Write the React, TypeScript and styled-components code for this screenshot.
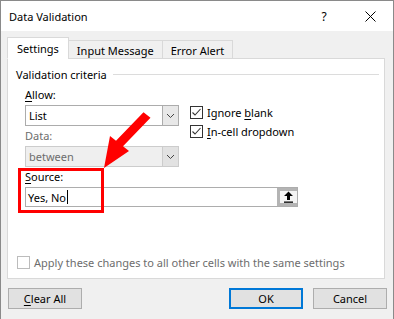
import React, { ReactElement } from 'react';
import styled, { createGlobalStyle } from 'styled-components';

const GlobalStyle = createGlobalStyle`
  html, body {
    margin: 0;
    padding: 0;
    background: #f0f0f0;
  }
  body {
    font-family: "Noto Sans", "Open Sans", sans-serif;
    font-size: 11px;
    color: #000;
  }
`;

const Window = styled.div`
  position: relative;
  width: 394px;
  height: 319px;
  box-sizing: border-box;
  border: 1px solid #8a8a8a;
  border-bottom: none;
  background: #f0f0f0;
  display: flex;
  flex-direction: column;
  overflow: hidden;
`;

const TitleBar = styled.div`
  height: 30px;
  background: #fff;
  display: flex;
  align-items: center;
  padding: 0 0 0 8px;
  font-size: 11px;
`;

const Title = styled.div`
  flex: 1;
`;

const HelpGlyph = styled.div`
  width: 46px;
  text-align: center;
  font-size: 12px;
`;

const CloseGlyph = styled.div`
  width: 46px;
  display: flex;
  justify-content: center;
`;

const Body = styled.div`
  flex: 1;
  padding: 7px 8px 0 6px;
  display: flex;
  flex-direction: column;
`;

const TabStrip = styled.div`
  display: flex;
  align-items: flex-end;
  height: 21px;
  position: relative;
  z-index: 1;
  margin-bottom: -1px;
`;

const Tab = styled.div<{ $active?: boolean }>`
  box-sizing: border-box;
  height: ${(p) => (p.$active ? '22px' : '19px')};
  padding: 0 ${(p) => (p.$active ? '9px' : '8px')};
  border: 1px solid #d9d9d9;
  border-bottom: ${(p) => (p.$active ? '1px solid #fff' : '1px solid #d9d9d9')};
  margin-left: ${(p) => (p.$active ? '0' : '-1px')};
  background: ${(p) => (p.$active ? '#fff' : '#f0f0f0')};
  display: flex;
  align-items: center;
  padding-top: ${(p) => (p.$active ? '0' : '1px')};
  white-space: nowrap;
`;

const Panel = styled.div`
  height: 221px;
  box-sizing: border-box;
  background: #fff;
  border: 1px solid #d9d9d9;
  display: flex;
  flex-direction: column;
  padding: 7px 5px 0 8px;
`;

const GroupHeader = styled.div`
  display: flex;
  align-items: center;
  height: 16px;
  gap: 6px;
  & > span {
    white-space: nowrap;
  }
  &::after {
    content: '';
    flex: 1;
    height: 1px;
    background: #dcdcdc;
  }
`;

const Criteria = styled.div`
  display: grid;
  grid-template-columns: 154px 1fr;
  column-gap: 11px;
  padding-left: 9px;
  margin-top: 5px;
`;

const FieldColumn = styled.div`
  display: flex;
  flex-direction: column;
`;

const Label = styled.div<{ $disabled?: boolean }>`
  height: 16px;
  line-height: 16px;
  margin-bottom: 2px;
  color: ${(p) => (p.$disabled ? '#6d6d6d' : '#000')};
`;

const Key = styled.span`
  text-decoration: underline;
  text-underline-offset: 2px;
`;

const Combo = styled.div<{ $disabled?: boolean }>`
  height: 21px;
  box-sizing: border-box;
  border: 1px solid ${(p) => (p.$disabled ? '#cccccc' : '#acacac')};
  background: ${(p) => (p.$disabled ? '#efefef' : '#fff')};
  color: ${(p) => (p.$disabled ? '#6d6d6d' : '#000')};
  display: flex;
  align-items: stretch;
  margin-bottom: 2px;
`;

const ComboText = styled.div`
  flex: 1;
  display: flex;
  align-items: center;
  padding-left: 3px;
`;

const ComboButton = styled.div<{ $disabled?: boolean }>`
  width: 15px;
  border-left: 1px solid ${(p) => (p.$disabled ? '#cccccc' : '#acacac')};
  background: ${(p) => (p.$disabled ? '#e2e2e2' : '#e8e8e8')};
  display: flex;
  align-items: center;
  justify-content: center;
`;

const CheckColumn = styled.div`
  display: flex;
  flex-direction: column;
  gap: 6px;
  padding-top: 19px;
`;

const CheckRow = styled.label<{ $disabled?: boolean }>`
  display: flex;
  align-items: center;
  gap: 4px;
  height: 13px;
  color: ${(p) => (p.$disabled ? '#6d6d6d' : '#000')};
`;

const Box = styled.div<{ $disabled?: boolean }>`
  width: 13px;
  height: 13px;
  box-sizing: border-box;
  border: 1px solid ${(p) => (p.$disabled ? '#bcbcbc' : '#333')};
  background: #fff;
  display: flex;
  align-items: center;
  justify-content: center;
`;

const SourceBlock = styled.div`
  display: flex;
  flex-direction: column;
  padding-left: 9px;
`;

const SourceField = styled.div`
  width: 273px;
  height: 20px;
  box-sizing: border-box;
  border: 1px solid #adadad;
  display: flex;
  align-items: stretch;
`;

const SourceText = styled.div`
  flex: 1;
  display: flex;
  align-items: center;
  padding-left: 2px;
`;

const Caret = styled.span`
  display: inline-block;
  width: 1px;
  height: 14px;
  background: #000;
  margin-left: 1px;
`;

const CollapseButton = styled.div`
  width: 20px;
  box-sizing: border-box;
  border: 3px solid #b4b4b4;
  border-right-width: 0;
  background: #f4f4f4;
  display: flex;
  align-items: center;
  justify-content: center;
`;

const ApplyRow = styled.div`
  margin-top: auto;
  margin-bottom: 9px;
  padding-left: 1px;
`;

const ButtonRow = styled.div`
  display: flex;
  align-items: center;
  margin-top: 9px;
  padding-left: 1px;
  margin-right: -2px;
`;

const Button = styled.div<{ $default?: boolean }>`
  width: 74px;
  height: 21px;
  box-sizing: border-box;
  border: ${(p) => (p.$default ? '2px solid #0078d7' : '1px solid #adadad')};
  background: #e1e1e1;
  display: flex;
  align-items: center;
  justify-content: center;
`;

const Spacer = styled.div`
  flex: 1;
`;

const ButtonGap = styled.div`
  width: 10px;
`;

const Highlight = styled.div`
  position: absolute;
  left: 17px;
  top: 167px;
  width: 86px;
  height: 45px;
  box-sizing: border-box;
  border: 3px solid #ff0000;
  pointer-events: none;
`;

const Arrow = styled.svg`
  position: absolute;
  left: 0;
  top: 0;
  pointer-events: none;
`;

function Chevron(): ReactElement {
  return (
    <svg width="9" height="6" viewBox="0 0 9 6">
      <path d="M1 1 L4.5 4.5 L8 1" fill="none" stroke="#444" strokeWidth="1" />
    </svg>
  );
}

function Check({ on }: { on: boolean }): ReactElement {
  return (
    <Box>
      {on && (
        <svg width="11" height="11" viewBox="0 0 11 11">
          <path d="M1.5 5.5 L4 8 L9.5 2" fill="none" stroke="#333" strokeWidth="1.1" />
        </svg>
      )}
    </Box>
  );
}

export default function App(): ReactElement {
  return (
    <>
      <GlobalStyle />
      <Window>
        <TitleBar>
          <Title>Data Validation</Title>
          <HelpGlyph>?</HelpGlyph>
          <CloseGlyph>
            <svg width="11" height="11" viewBox="0 0 11 11">
              <path d="M0.5 0.5 L10.5 10.5 M10.5 0.5 L0.5 10.5" stroke="#000" strokeWidth="1" />
            </svg>
          </CloseGlyph>
        </TitleBar>
        <Body>
          <TabStrip>
            <Tab $active>Settings</Tab>
            <Tab>Input Message</Tab>
            <Tab>Error Alert</Tab>
          </TabStrip>
          <Panel>
            <GroupHeader>
              <span>Validation criteria</span>
            </GroupHeader>
            <Criteria>
              <FieldColumn>
                <Label>
                  <Key>A</Key>llow:
                </Label>
                <Combo>
                  <ComboText>List</ComboText>
                  <ComboButton>
                    <Chevron />
                  </ComboButton>
                </Combo>
                <Label $disabled>Data:</Label>
                <Combo $disabled>
                  <ComboText>between</ComboText>
                  <ComboButton $disabled>
                    <Chevron />
                  </ComboButton>
                </Combo>
              </FieldColumn>
              <CheckColumn>
                <CheckRow>
                  <Check on />
                  <span>
                    Ignore <Key>b</Key>lank
                  </span>
                </CheckRow>
                <CheckRow>
                  <Check on />
                  <span>
                    <Key>I</Key>n-cell dropdown
                  </span>
                </CheckRow>
              </CheckColumn>
            </Criteria>
            <SourceBlock>
              <Label>
                <Key>S</Key>ource:
              </Label>
              <SourceField>
                <SourceText>
                  Yes, No<Caret />
                </SourceText>
                <CollapseButton>
                  <svg width="11" height="12" viewBox="0 0 11 12">
                    <path d="M5.5 0.5 L10 5 L7 5 L7 9 L4 9 L4 5 L1 5 Z" fill="#000" />
                    <rect x="1" y="10.5" width="9" height="1.3" fill="#000" />
                  </svg>
                </CollapseButton>
              </SourceField>
            </SourceBlock>
            <ApplyRow>
              <CheckRow $disabled>
                <Box $disabled />
                <span>Apply these changes to all other cells with the same settings</span>
              </CheckRow>
            </ApplyRow>
          </Panel>
          <ButtonRow>
            <Button>
              <span>
                <Key>C</Key>lear All
              </span>
            </Button>
            <Spacer />
            <Button $default>OK</Button>
            <ButtonGap />
            <Button>Cancel</Button>
          </ButtonRow>
        </Body>
        <Highlight />
        <Arrow width="394" height="319" viewBox="0 0 394 319">
          <polygon
            points="142.5,111.2 149.5,116.8 122,145.3 128,150 103,167 109,135 115,139.7"
            fill="#ff0000"
          />
        </Arrow>
      </Window>
    </>
  );
}
